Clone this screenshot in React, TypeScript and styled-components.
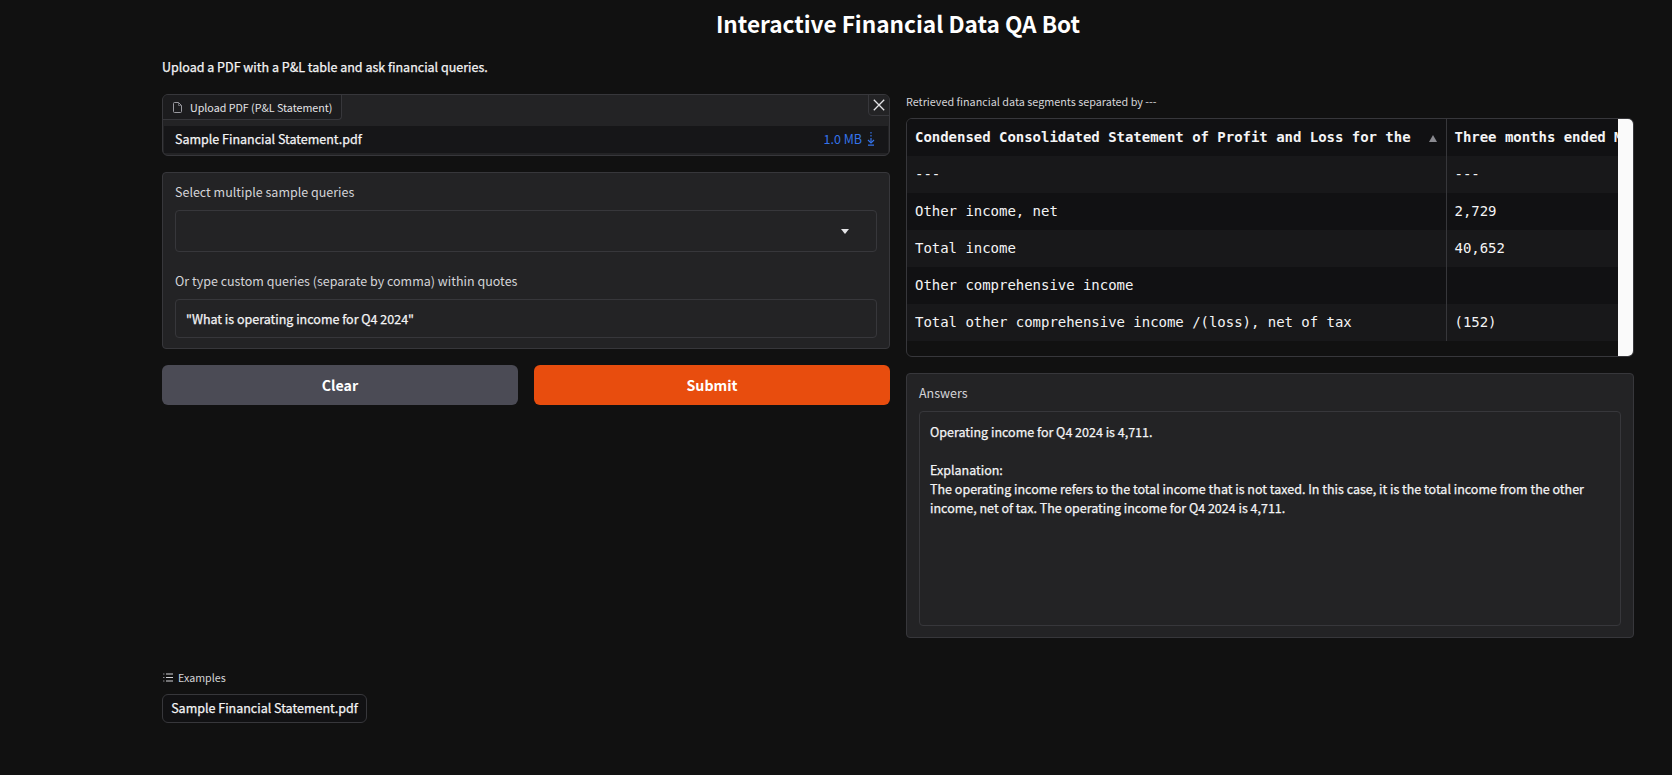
import React from "react";
import styled, { createGlobalStyle } from "styled-components";

const Global = createGlobalStyle`
  html, body { margin: 0; padding: 0; background: #111111; }
  body { font-family: "Noto Sans CJK SC", "Noto Sans", sans-serif; color: #f4f4f5; }
  * { box-sizing: border-box; }
`;

const Page = styled.div`
  width: 1672px;
  height: 775px;
  padding-left: 162px;
  overflow: hidden;
`;
const Shell = styled.div`
  width: 1472px;
`;
const Title = styled.h1`
  margin: 0;
  height: 50px;
  line-height: 48px;
  font-size: 22.6px;
  font-weight: 700;
  text-align: center;
  color: #fff;
`;
const Description = styled.p`
  margin: 7px 0 17px;
  height: 20px;
  line-height: 19px;
  font-size: 12.5px;
  font-weight: 400;
  -webkit-text-stroke: 0.25px currentColor;
`;
const Columns = styled.div`
  display: grid;
  grid-template-columns: 728px 728px;
  gap: 16px;
  align-items: start;
`;
const Column = styled.div`
  display: flex;
  flex-direction: column;
  gap: 16px;
`;
const UploadBox = styled.div`
  position: relative;
  height: 62px;
  background: #232325;
  border: 1px solid #37373b;
  border-radius: 6px;
  overflow: hidden;
`;
const UploadTab = styled.div`
  display: flex;
  align-items: center;
  gap: 7px;
  width: 179px;
  height: 25px;
  padding-left: 9px;
  font-size: 10.7px;
  white-space: nowrap;
  color: #e4e4e7;
  background: #1c1c1e;
  border-right: 1px solid #37373b;
  border-bottom: 1px solid #37373b;
  border-bottom-right-radius: 4px;
`;
const CloseButton = styled.button`
  position: absolute;
  top: -1px;
  right: -1px;
  width: 22px;
  height: 22px;
  display: flex;
  align-items: center;
  justify-content: center;
  padding: 0;
  background: #232325;
  border: 1px solid #37373b;
  border-bottom-left-radius: 4px;
  color: #e4e4e7;
`;
const FileRow = styled.div`
  display: flex;
  align-items: center;
  justify-content: space-between;
  height: 27px;
  margin: 6px 1px 0 1px;
  padding: 0 13px 2px 11px;
  background: #161618;
  font-size: 12.5px;
  font-weight: 400;
  -webkit-text-stroke: 0.25px currentColor;
`;
const FileSize = styled.span`
  display: flex;
  align-items: center;
  gap: 5px;
  color: #3473ea;
  font-size: 12.5px;
  font-weight: 400;
  -webkit-text-stroke: 0;
`;
const Panel = styled.div<{ $h: number }>`
  height: ${(p) => p.$h}px;
  background: #232325;
  border: 1px solid #37373b;
  border-radius: 4px;
  padding: 0 12px;
`;
const FieldLabel = styled.label<{ $top: number }>`
  display: block;
  margin-top: ${(p) => p.$top}px;
  height: 18px;
  line-height: 18px;
  font-size: 12.5px;
  color: #d4d4d8;
`;
const SelectBox = styled.div`
  display: flex;
  align-items: center;
  justify-content: flex-end;
  height: 42px;
  margin-top: 9px;
  padding-right: 27px;
  border: 1px solid #37373b;
  border-radius: 4px;
`;
const Caret = styled.span`
  width: 0;
  height: 0;
  border-left: 4px solid transparent;
  border-right: 4px solid transparent;
  border-top: 5px solid #e4e4e7;
`;
const TextInput = styled.div`
  display: flex;
  align-items: center;
  height: 39px;
  margin-top: 9px;
  padding-left: 10px;
  border: 1px solid #37373b;
  border-radius: 4px;
  font-size: 12.5px;
  font-weight: 400;
  -webkit-text-stroke: 0.25px currentColor;
`;
const Buttons = styled.div`
  display: grid;
  grid-template-columns: 356px 356px;
  gap: 16px;
`;
const ActionButton = styled.button<{ $primary?: boolean }>`
  height: 40px;
  border: none;
  border-radius: 6px;
  background: ${(p) => (p.$primary ? "#e84d0e" : "#4b4b55")};
  color: #fff;
  font-family: inherit;
  font-size: 14.2px;
  font-weight: 700;
`;
const SmallLabel = styled.div`
  height: 16px;
  line-height: 14px;
  font-size: 10.8px;
  color: #d4d4d8;
`;
const TableBox = styled.div`
  display: flex;
  height: 239px;
  margin-top: 8px;
  border: 1px solid #37373b;
  border-radius: 6px;
  overflow: hidden;
`;
const TableScroll = styled.div`
  flex: 1;
  min-width: 0;
  overflow: hidden;
`;
const ScrollTrack = styled.div`
  width: 15px;
  background: #fafafa;
`;
const DataTable = styled.table`
  border-collapse: collapse;
  table-layout: fixed;
  width: 900px;
  font-family: "DejaVu Sans Mono", "Liberation Mono", monospace;
  font-size: 14px;
  letter-spacing: -0.03px;
`;
const Row = styled.tr<{ $alt?: boolean }>`
  height: 37px;
  background: ${(p) => (p.$alt ? "#18181a" : "#111113")};
`;
const HeadCell = styled.th`
  position: relative;
  padding: 0 8px 2px;
  height: 37px;
  text-align: left;
  font-weight: 700;
  white-space: nowrap;
  color: #f4f4f5;
  & + & { border-left: 1px solid #37373b; }
`;
const SortMark = styled.span`
  position: absolute;
  right: 9px;
  top: 16px;
  width: 0;
  height: 0;
  border-left: 4px solid transparent;
  border-right: 4px solid transparent;
  border-bottom: 7px solid #8a8a90;
`;
const Cell = styled.td`
  padding: 0 8px 2px;
  white-space: nowrap;
  color: #f4f4f5;
  & + & { border-left: 1px solid #37373b; }
`;
const AnswerPanel = styled.div`
  height: 265px;
  padding: 0 12px;
  background: #232325;
  border: 1px solid #37373b;
  border-radius: 4px;
`;
const AnswerBox = styled.div`
  height: 215px;
  margin-top: 9px;
  padding: 10px 10px;
  border: 1px solid #37373b;
  border-radius: 4px;
  font-size: 12.5px;
  font-weight: 400;
  -webkit-text-stroke: 0.25px currentColor;
  line-height: 19px;
  white-space: pre-wrap;
`;
const Examples = styled.div`
  margin-top: 29px;
`;
const ExamplesHead = styled.div`
  display: flex;
  align-items: center;
  gap: 5px;
  height: 20px;
  padding-left: 1px;
  font-size: 10.7px;
  color: #d4d4d8;
`;
const ExampleButton = styled.button`
  display: block;
  margin-top: 7px;
  height: 29px;
  width: 205px;
  padding: 0 0 2px;
  text-align: center;
  white-space: nowrap;
  background: #111113;
  border: 1px solid #37373b;
  border-radius: 6px;
  color: #f4f4f5;
  font-family: inherit;
  font-size: 12.5px;
  font-weight: 400;
  -webkit-text-stroke: 0.25px currentColor;
`;

const FileIcon = () => (
  <svg width="11" height="13" viewBox="0 0 11 13" fill="none" stroke="#9a9aa0" strokeWidth="1" strokeLinejoin="round">
    <path d="M2.5 1.5h4l3 3v6a1 1 0 0 1-1 1h-6a1 1 0 0 1-1-1v-8a1 1 0 0 1 1-1z" />
    <path d="M6.5 1.5v3h3" opacity="0.6" />
  </svg>
);
const CloseIcon = () => (
  <svg width="14" height="14" viewBox="0 0 14 14" stroke="currentColor" strokeWidth="1.3">
    <path d="M1.8 1.8l10.4 10.4M12.2 1.8L1.8 12.2" />
  </svg>
);
const DownloadIcon = () => (
  <svg width="8" height="14" viewBox="0 0 8 14" fill="none" stroke="#3473ea" strokeWidth="1.2">
    <path d="M4 0v1.6M4 3v1.6M4 6v4" />
    <path d="M1 8l3 3 3-3" />
    <path d="M1 13.2h6" />
  </svg>
);
const ListIcon = () => (
  <svg width="10" height="9" viewBox="0 0 10 9">
    <path d="M0 1h1.5M0 4.5h1.5M0 8h1.5" stroke="#8a8a90" strokeWidth="1" />
    <path d="M3 1h7M3 4.5h7M3 8h7" stroke="#d4d4d8" strokeWidth="1" />
  </svg>
);

const rows: [string, string][] = [
  ["---", "---"],
  ["Other income, net", "2,729"],
  ["Total income", "40,652"],
  ["Other comprehensive income", ""],
  ["Total other comprehensive income /(loss), net of tax", "(152)"],
];

const answer = `Operating income for Q4 2024 is 4,711.

Explanation:
The operating income refers to the total income that is not taxed. In this case, it is the total income from the other income, net of tax. The operating income for Q4 2024 is 4,711.`;

export default function App() {
  return (
    <Page>
      <Global />
      <Shell>
        <Title>Interactive Financial Data QA Bot</Title>
        <Description>Upload a PDF with a P&amp;L table and ask financial queries.</Description>
        <Columns>
          <Column>
            <UploadBox>
              <UploadTab>
                <FileIcon />
                Upload PDF (P&amp;L Statement)
              </UploadTab>
              <CloseButton aria-label="Remove"><CloseIcon /></CloseButton>
              <FileRow>
                Sample Financial Statement.pdf
                <FileSize>1.0 MB <DownloadIcon /></FileSize>
              </FileRow>
            </UploadBox>
            <Panel $h={177}>
              <FieldLabel $top={10}>Select multiple sample queries</FieldLabel>
              <SelectBox><Caret /></SelectBox>
              <FieldLabel $top={20}>Or type custom queries (separate by comma) within quotes</FieldLabel>
              <TextInput>"What is operating income for Q4 2024"</TextInput>
            </Panel>
            <Buttons>
              <ActionButton>Clear</ActionButton>
              <ActionButton $primary>Submit</ActionButton>
            </Buttons>
          </Column>
          <Column>
            <div>
              <SmallLabel>Retrieved financial data segments separated by ---</SmallLabel>
              <TableBox>
                <TableScroll>
                  <DataTable>
                    <colgroup>
                      <col style={{ width: 539 }} />
                      <col style={{ width: 361 }} />
                    </colgroup>
                    <thead>
                      <Row>
                        <HeadCell>
                          Condensed Consolidated Statement of Profit and Loss for the
                          <SortMark />
                        </HeadCell>
                        <HeadCell>Three months ended March 31</HeadCell>
                      </Row>
                    </thead>
                    <tbody>
                      {rows.map((r, i) => (
                        <Row key={r[0]} $alt={i % 2 === 0}>
                          <Cell>{r[0]}</Cell>
                          <Cell>{r[1]}</Cell>
                        </Row>
                      ))}
                    </tbody>
                  </DataTable>
                </TableScroll>
                <ScrollTrack />
              </TableBox>
            </div>
            <AnswerPanel>
              <FieldLabel $top={10}>Answers</FieldLabel>
              <AnswerBox>{answer}</AnswerBox>
            </AnswerPanel>
          </Column>
        </Columns>
        <Examples>
          <ExamplesHead><ListIcon />Examples</ExamplesHead>
          <ExampleButton>Sample Financial Statement.pdf</ExampleButton>
        </Examples>
      </Shell>
    </Page>
  );
}
